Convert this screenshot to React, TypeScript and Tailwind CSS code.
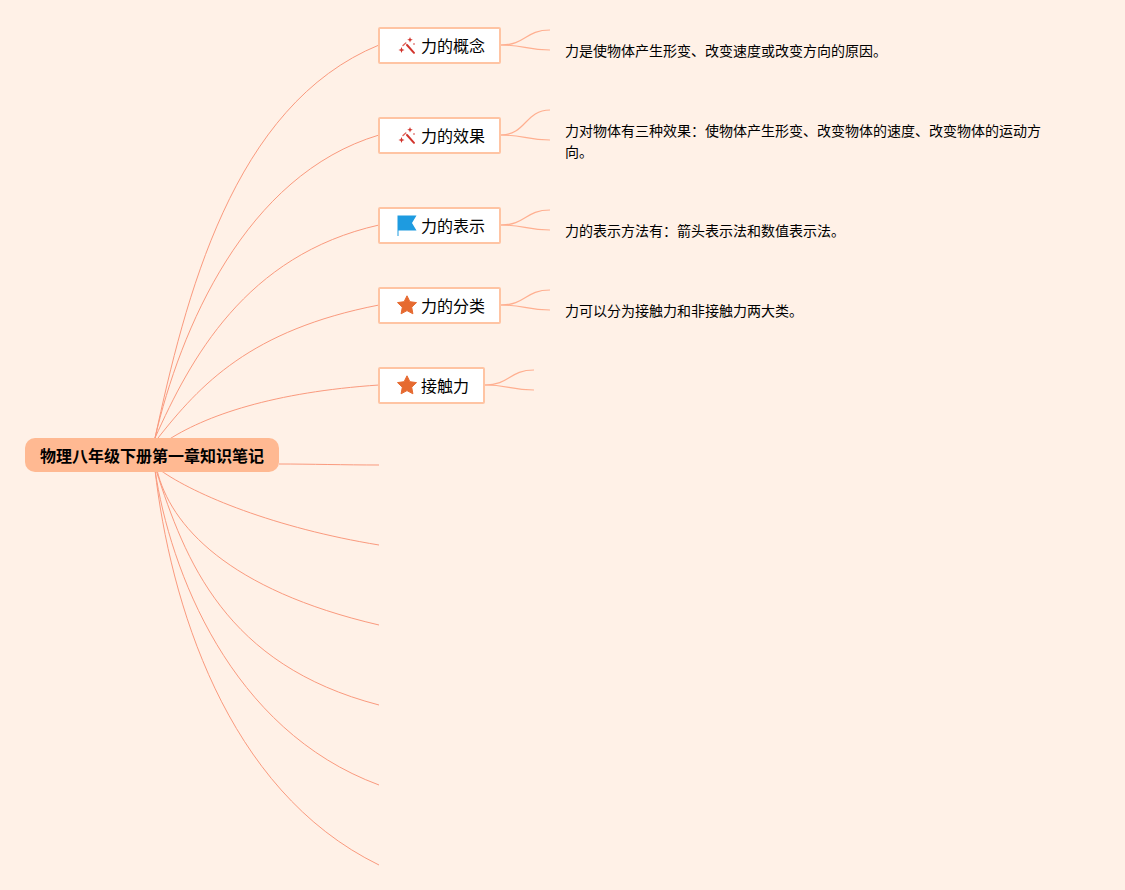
const FONT = "font-['Noto_Sans_CJK_SC','Noto_Sans',sans-serif]";

type Topic = {
  title: string;
  icon: "wand" | "flag" | "star";
  y: number;
  width: number;
  text?: string;
};

const topics: Topic[] = [
  { title: "力的概念", icon: "wand", y: 45, width: 123, text: "力是使物体产生形变、改变速度或改变方向的原因。" },
  { title: "力的效果", icon: "wand", y: 135, width: 123, text: "力对物体有三种效果：使物体产生形变、改变物体的速度、改变物体的运动方向。" },
  { title: "力的表示", icon: "flag", y: 225, width: 123, text: "力的表示方法有：箭头表示法和数值表示法。" },
  { title: "力的分类", icon: "star", y: 305, width: 123, text: "力可以分为接触力和非接触力两大类。" },
  { title: "接触力", icon: "star", y: 385, width: 107 },
];

// hand traced from the reference
const mainLines = [
  "M155 438C185 300 232 105 379 45",
  "M155 438C180 330 245 175 379 135",
  "M155 438C190 360 245 255 379 225",
  "M158 438C200 385 250 330 379 305",
  "M165 442C205 415 275 392 379 385",
  "M279 464C310 464 345 465 379 465",
  "M160 470C195 495 275 528 379 545",
  "M157 470C170 525 228 590 379 625",
  "M156 470C185 560 225 665 379 705",
  "M155 470C170 570 230 730 379 785",
  "M155 470C170 600 225 790 379 865",
];

function Icon({ name }: { name: Topic["icon"] }) {
  if (name === "flag") {
    return (
      <svg width="20" height="24" viewBox="0 0 20 24">
        <path d="M0.5 2.5H19.5L15 10L19.5 17.5H1.5V23H0.5Z" fill="#1e9be0" />
      </svg>
    );
  }
  if (name === "star") {
    return (
      <svg width="20" height="20" viewBox="0 0 20 20">
        <path
          d="M10 0.8L12.9 6.7L19.5 7.6L14.7 12.2L15.9 18.8L10 15.6L4.1 18.8L5.3 12.2L0.5 7.6L7.1 6.7Z"
          fill="#e66a30"
          stroke="#e66a30"
          strokeLinejoin="round"
        />
      </svg>
    );
  }
  return (
    <svg width="20" height="20" viewBox="0 0 20 20">
      <path d="M10 10L17 17.8" stroke="#d2342c" strokeWidth="2" strokeLinecap="round" />
      <path d="M13 2L13.8 4L15.8 4.8L13.8 5.6L13 7.6L12.2 5.6L10.2 4.8L12.2 4Z" fill="#d2342c" />
      <path d="M4.5 12L5.4 14.2L7.6 15L5.4 15.8L4.5 18L3.6 15.8L1.4 15L3.6 14.2Z" fill="#d2342c" />
      <path d="M6 10.5L8.8 8" stroke="#e0645a" strokeWidth="1.4" strokeLinecap="round" />
      <circle cx="17" cy="9" r="0.8" fill="#d2342c" />
    </svg>
  );
}

export default function App() {
  return (
    <div className={`relative w-[1125px] h-[890px] overflow-hidden bg-[#fff1e7] ${FONT}`}>
      <svg className="absolute inset-0" width="1125" height="890" fill="none">
        {mainLines.map((d) => (
          <path key={d} d={d} stroke="#fa9a7e" strokeWidth="1" />
        ))}
        {topics.map((t) => {
          const x = 378 + t.width;
          const end = x + 49;
          const top = t.y === 135 ? t.y - 25 : t.y - 15;
          const bottom = t.y + 5;
          return (
            <g key={t.title} stroke="#ffaf90" strokeWidth="1.2">
              <path d={`M${x} ${t.y}C${x + 25} ${t.y} ${x + 24} ${top} ${end} ${top}`} />
              <path d={`M${x} ${t.y}C${x + 22} ${t.y} ${x + 26} ${bottom} ${end} ${bottom}`} />
            </g>
          );
        })}
      </svg>

      <div className="absolute left-[25px] top-[438px] h-[34px] w-[254px] rounded-[10px] bg-[#ffb992] flex items-center justify-center text-[16px] font-bold text-black">
        物理八年级下册第一章知识笔记
      </div>

      {topics.map((t) => (
        <div key={t.title}>
          <div
            className="absolute left-[378px] h-[37px] flex items-center gap-[4px] pl-[17px] pb-[2px] border-2 border-[#ffc4a3] rounded-[2px] bg-white text-[16px] text-black"
            style={{ top: t.y - 18, width: t.width }}
          >
            <div className="w-[20px] flex justify-center shrink-0">
              <Icon name={t.icon} />
            </div>
            <span className="whitespace-nowrap leading-[22px]">{t.title}</span>
          </div>
          {t.text && (
            <p
              className="absolute left-[565px] w-[490px] text-[14px] leading-[21px] text-black"
              style={{ top: t.y === 135 ? 120 : t.y - 5 }}
            >
              {t.text}
            </p>
          )}
        </div>
      ))}
    </div>
  );
}
